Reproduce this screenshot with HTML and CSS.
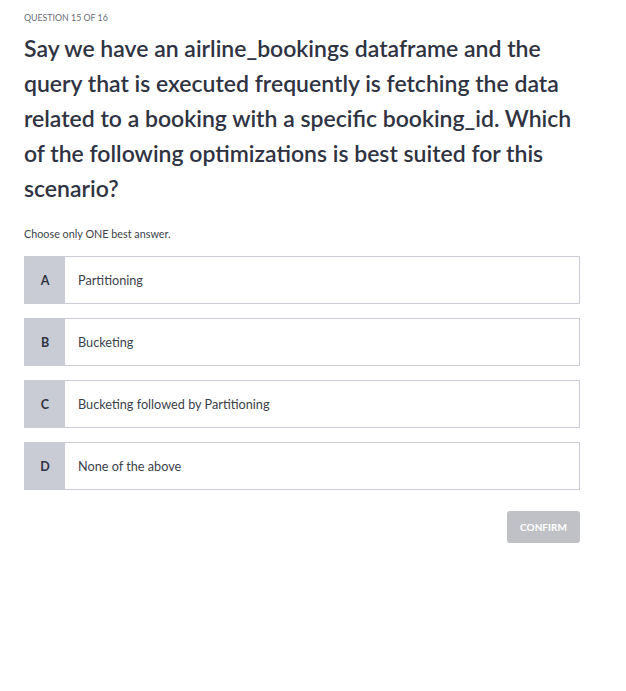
FILE: index.html
```html
<!DOCTYPE html>
<html>
<head>
<meta charset="utf-8">
<link rel="stylesheet" href="styles.css">
</head>
<body>
<div class="quiz">
  <div class="counter">QUESTION 15 OF 16</div>
  <h1 class="question">Say we have an airline_bookings dataframe and the query that is executed frequently is fetching the data related to a booking with a specific booking_id. Which of the following optimizations is best suited for this scenario?</h1>
  <div class="hint">Choose only ONE best answer.</div>
  <div class="options">
    <div class="option"><div class="letter">A</div><div class="text">Partitioning</div></div>
    <div class="option"><div class="letter">B</div><div class="text">Bucketing</div></div>
    <div class="option"><div class="letter">C</div><div class="text">Bucketing followed by Partitioning</div></div>
    <div class="option"><div class="letter">D</div><div class="text">None of the above</div></div>
  </div>
  <div class="actions"><button class="confirm">CONFIRM</button></div>
</div>
</body>
</html>
```
FILE: styles.css
```css
html, body { margin: 0; padding: 0; background: #fff; }
body { font-family: "Lato", "Open Sans", sans-serif; color: #2f3342; }
.quiz { width: 556px; padding: 11px 24px 0 24px; }
.counter { font-size: 8.8px; line-height: 14px; color: #6b6e78; }
.question { font-size: 23px; line-height: 35px; font-weight: 600; margin: 6px 0 0 0; color: #2f3342; }
.hint { font-size: 10.8px; line-height: 15px; margin-top: 20px; color: #3c3f4a; }
.options { margin-top: 15px; display: flex; flex-direction: column; gap: 14px; }
.option { display: flex; height: 48px; border: 1px solid #cbcdd5; box-sizing: border-box; }
.letter { width: 40px; background: #c9ccd5; display: flex; align-items: center; justify-content: center; font-size: 12.5px; font-weight: 700; color: #2f3342; }
.text { display: flex; align-items: center; padding-left: 13px; font-size: 12.7px; color: #3c3f4a; }
.actions { display: flex; justify-content: flex-end; margin-top: 21px; }
.confirm { width: 73px; height: 32px; border: none; border-radius: 3px; background: #c0c1c6; color: #fff; font-family: inherit; font-size: 10px; font-weight: 700; padding: 0; }
```
